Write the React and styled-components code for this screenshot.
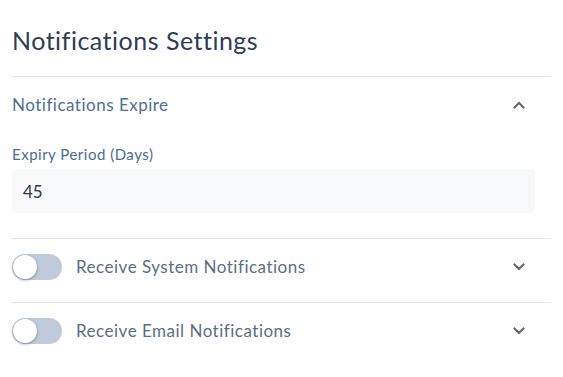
import React from "react";
import styled, { createGlobalStyle } from "styled-components";

const Global = createGlobalStyle`
  html, body { margin: 0; padding: 0; background: #ffffff; }
  body { font-family: Lato, "Noto Sans", sans-serif; }
  * { box-sizing: border-box; }
`;

const Page = styled.div`
  width: 563px;
  padding: 26px 12px 0 12px;
`;

const Title = styled.h1`
  margin: 0 0 21px 0;
  font-size: 25px;
  line-height: 29px;
  font-weight: 400;
  letter-spacing: 0.5px;
  color: #2f3d55;
`;

const Section = styled.section`
  width: 539px;
  border-top: 1px solid #e2e4e7;
`;

const Header = styled.div`
  display: flex;
  align-items: center;
  gap: 14px;
  height: ${(p) => p.$h}px;
  padding-right: 26px;
`;

const HeaderText = styled.span`
  flex: 1;
  font-size: 17px;
  line-height: 20px;
  letter-spacing: 0.5px;
  color: ${(p) => (p.$accent ? "#4e6f93" : "#5b6e86")};
`;

const Body = styled.div`
  padding: 13px 16px 25px 0;
`;

const Label = styled.label`
  display: block;
  font-size: 15px;
  line-height: 17px;
  letter-spacing: 0.5px;
  color: #4a6d93;
  margin-bottom: 6px;
`;

const Input = styled.div`
  height: 44px;
  border-radius: 5px;
  background: #f7f9fb;
  display: flex;
  align-items: center;
  padding-left: 11px;
  font-size: 17px;
  color: #2f3542;
`;

const Track = styled.span`
  position: relative;
  flex: none;
  width: 50px;
  height: 26px;
  border-radius: 13px;
  background: #bfcbd9;
`;

const Knob = styled.span`
  position: absolute;
  left: 1px;
  top: 1px;
  width: 24px;
  height: 24px;
  border-radius: 50%;
  background: #ffffff;
  box-shadow: 0 1px 3px rgba(0, 0, 0, 0.35);
`;

const Spacer = styled.div`
  height: ${(p) => p.$h}px;
`;

const Chevron = ({ up }) => (
  <svg width="12" height="8" viewBox="0 0 12 8" fill="none">
    <path
      d={up ? "M1.5 6.5 L6 2 L10.5 6.5" : "M1.5 1.5 L6 6 L10.5 1.5"}
      stroke="#666"
      strokeWidth="2"
      strokeLinecap="square"
    />
  </svg>
);

const Toggle = () => (
  <Track>
    <Knob />
  </Track>
);

export default function App() {
  return (
    <Page>
      <Global />
      <Title>Notifications Settings</Title>
      <Section>
        <Header $h={56}>
          <HeaderText $accent>Notifications Expire</HeaderText>
          <Chevron up />
        </Header>
        <Body>
          <Label>Expiry Period (Days)</Label>
          <Input>45</Input>
        </Body>
      </Section>
      <Section>
        <Header $h={56}>
          <Toggle />
          <HeaderText>Receive System Notifications</HeaderText>
          <Chevron />
        </Header>
        <Spacer $h={7} />
      </Section>
      <Section>
        <Header $h={56}>
          <Toggle />
          <HeaderText>Receive Email Notifications</HeaderText>
          <Chevron />
        </Header>
      </Section>
    </Page>
  );
}
